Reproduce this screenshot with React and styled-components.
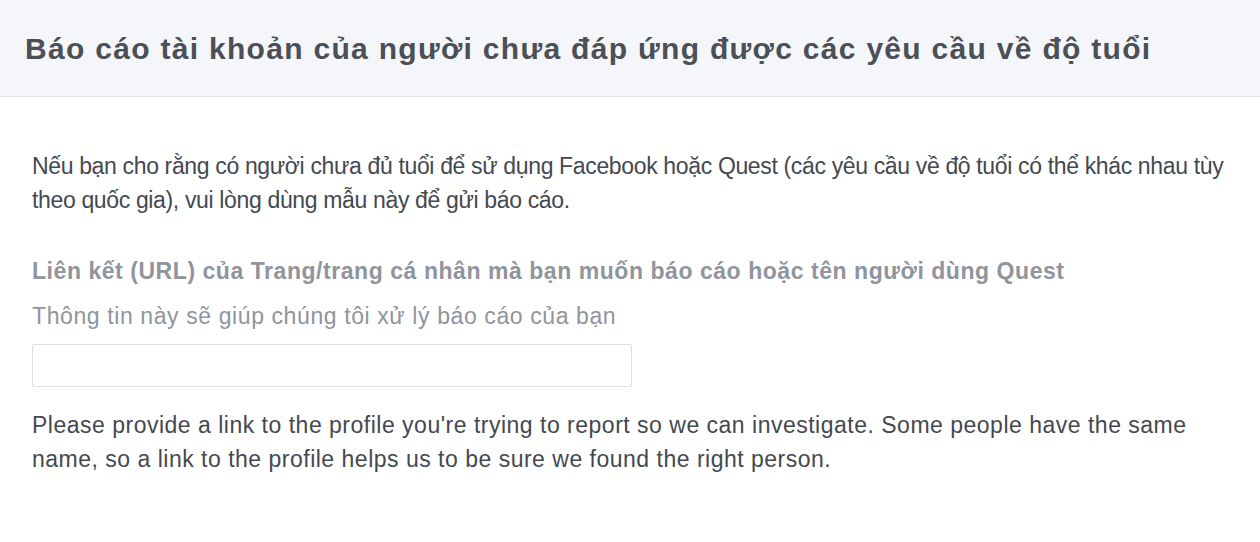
import React from 'react';
import styled, { createGlobalStyle } from 'styled-components';

const GlobalStyle = createGlobalStyle`
  body {
    margin: 0;
    background: #fff;
    font-family: "Liberation Sans", Arial, Helvetica, sans-serif;
  }
`;

const Page = styled.div`
  width: 1260px;
  min-height: 542px;
  background: #fff;
`;

const Header = styled.header`
  height: 96px;
  background: #f5f6f9;
  border-bottom: 1px solid #e2e3e6;
  display: flex;
  align-items: center;
  padding: 0 25px;
  box-sizing: content-box;
`;

const Title = styled.h1`
  margin: 0;
  font-size: 30px;
  font-weight: 700;
  letter-spacing: 1.3px;
  color: #4b4f56;
  padding-top: 2px;
  white-space: nowrap;
`;

const Body = styled.div`
  padding: 52px 20px 0 32px;
`;

const Paragraph = styled.p`
  margin: 0;
  font-size: 23px;
  line-height: 34px;
  letter-spacing: ${p => p.$spacing || 0}px;
  color: #444950;
`;

const Field = styled.div`
  margin-top: 42px;
  display: flex;
  flex-direction: column;
`;

const Label = styled.label`
  font-size: 23px;
  font-weight: 700;
  line-height: 24px;
  letter-spacing: 0.55px;
  color: #90949c;
`;

const Hint = styled.div`
  margin-top: 21px;
  font-size: 23px;
  line-height: 24px;
  letter-spacing: 0.6px;
  color: #90949c;
`;

const Input = styled.input`
  margin-top: 16px;
  width: 600px;
  height: 43px;
  box-sizing: border-box;
  border: 1px solid #dddfe2;
  border-radius: 2px;
  background: #fff;
  font-size: 20px;
  font-family: inherit;
  outline: none;
  padding: 0 10px;
`;

const Note = styled(Paragraph)`
  margin-top: 21px;
`;

export default function App() {
  return (
    <Page>
      <GlobalStyle />
      <Header>
        <Title>Báo cáo tài khoản của người chưa đáp ứng được các yêu cầu về độ tuổi</Title>
      </Header>
      <Body>
        <Paragraph $spacing={-0.35}>
          Nếu bạn cho rằng có người chưa đủ tuổi để sử dụng Facebook hoặc Quest (các yêu cầu về độ tuổi có thể khác nhau tùy theo quốc gia), vui lòng dùng mẫu này để gửi báo cáo.
        </Paragraph>
        <Field>
          <Label htmlFor="url">Liên kết (URL) của Trang/trang cá nhân mà bạn muốn báo cáo hoặc tên người dùng Quest</Label>
          <Hint>Thông tin này sẽ giúp chúng tôi xử lý báo cáo của bạn</Hint>
          <Input id="url" type="text" />
        </Field>
        <Note $spacing={0.5}>
          Please provide a link to the profile you're trying to report so we can investigate. Some people have the same name, so a link to the profile helps us to be sure we found the right person.
        </Note>
      </Body>
    </Page>
  );
}
